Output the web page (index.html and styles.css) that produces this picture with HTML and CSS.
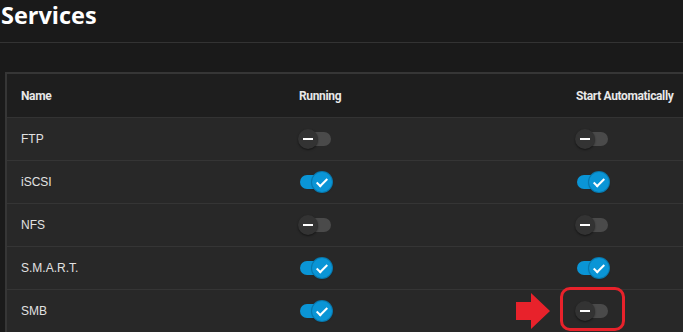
FILE: index.html
```html
<!DOCTYPE html>
<html lang="en">
<head>
    <meta charset="UTF-8">
    <meta name="viewport" content="width=device-width, initial-scale=1.0">
    <title>Services</title>
    <link rel="stylesheet" href="styles.css">
</head>
<body>
    <div class="page-header">
        <h1>Services</h1>
    </div>

    <div class="card">
        <div class="row head">
            <div class="cell">Name</div>
            <div class="cell">Running</div>
            <div class="cell">Start Automatically</div>
        </div>

        <div class="row">
            <div class="cell">FTP</div>
            <div class="cell"><span class="toggle"><span class="thumb"></span></span></div>
            <div class="cell"><span class="toggle"><span class="thumb"></span></span></div>
        </div>

        <div class="row">
            <div class="cell">iSCSI</div>
            <div class="cell"><span class="toggle on"><span class="thumb"></span></span></div>
            <div class="cell"><span class="toggle on"><span class="thumb"></span></span></div>
        </div>

        <div class="row">
            <div class="cell">NFS</div>
            <div class="cell"><span class="toggle"><span class="thumb"></span></span></div>
            <div class="cell"><span class="toggle"><span class="thumb"></span></span></div>
        </div>

        <div class="row">
            <div class="cell">S.M.A.R.T.</div>
            <div class="cell"><span class="toggle on"><span class="thumb"></span></span></div>
            <div class="cell"><span class="toggle on"><span class="thumb"></span></span></div>
        </div>

        <div class="row">
            <div class="cell">SMB</div>
            <div class="cell"><span class="toggle on"><span class="thumb"></span></span></div>
            <div class="cell marked">
                <svg class="arrow" width="34" height="36" viewBox="0 0 34 36">
                    <path d="M0 9 H15 V0 L34 18 L15 36 V27 H0 Z" fill="#e8222b"/>
                </svg>
                <span class="highlight"></span>
                <span class="toggle"><span class="thumb"></span></span>
            </div>
        </div>
    </div>
</body>
</html>
```

FILE: styles.css
```css
body {
    margin: 0;
    padding: 0;
    background: #1a1a1a;
    color: #e2e2e2;
    font-family: 'Liberation Sans', Arial, sans-serif;
    height: 100vh;
    overflow: hidden;
}

.page-header {
    height: 42px;
    border-bottom: 1px solid #333333;
}

.page-header h1 {
    margin: 0;
    padding: 1px 0 0 1px;
    font-family: 'Open Sans', sans-serif;
    font-size: 23.5px;
    font-weight: 700;
    line-height: 28px;
    color: #ffffff;
}

.card {
    margin: 29px 0 0 5px;
    width: 800px;
    border: 2px solid #363636;
    border-right: none;
    border-bottom: none;
    background: #282828;
}

.row {
    display: grid;
    grid-template-columns: 278px 277px 1fr;
    height: 42px;
    border-bottom: 1px solid #353535;
}

.row.head {
    height: 43px;
    background: #1e1e1e;
    border-bottom: 1px solid #333333;
}

.cell {
    display: flex;
    align-items: center;
    padding-left: 14px;
    font-size: 12px;
    position: relative;
}

.head .cell {
    font-family: 'Roboto', sans-serif;
    font-weight: 700;
    font-size: 12px;
    letter-spacing: -0.35px;
    color: #e8e8e8;
}

.toggle {
    position: relative;
    display: inline-block;
    width: 31px;
    height: 14px;
    margin-left: 1px;
    border-radius: 7px;
    background: #4a4a4a;
}

.toggle .thumb {
    position: absolute;
    top: -3px;
    left: -2px;
    width: 20px;
    height: 20px;
    border-radius: 50%;
    background: #333333;
    box-shadow: 0 1px 2px rgba(0, 0, 0, 0.5);
}

.toggle .thumb::after {
    content: '';
    position: absolute;
    left: 5px;
    top: 9px;
    width: 10px;
    height: 2px;
    background: #ffffff;
}

.toggle.on {
    background: #0a95d6;
}

.toggle.on .thumb {
    left: 12px;
    background: #0a95d6;
    box-shadow: 0 0 0 1px #0878ad, 0 1px 2px rgba(0, 0, 0, 0.4);
}

.toggle.on .thumb::after {
    left: 7px;
    top: 4px;
    width: 4px;
    height: 9px;
    background: none;
    border-right: 2px solid #ffffff;
    border-bottom: 2px solid #ffffff;
    transform: rotate(45deg);
}

.marked .arrow {
    position: absolute;
    left: -46px;
    top: 3px;
}

.marked .highlight {
    position: absolute;
    left: -2px;
    top: -3px;
    width: 59px;
    height: 38px;
    border: 3px solid #e8222b;
    border-radius: 10px;
}
```
